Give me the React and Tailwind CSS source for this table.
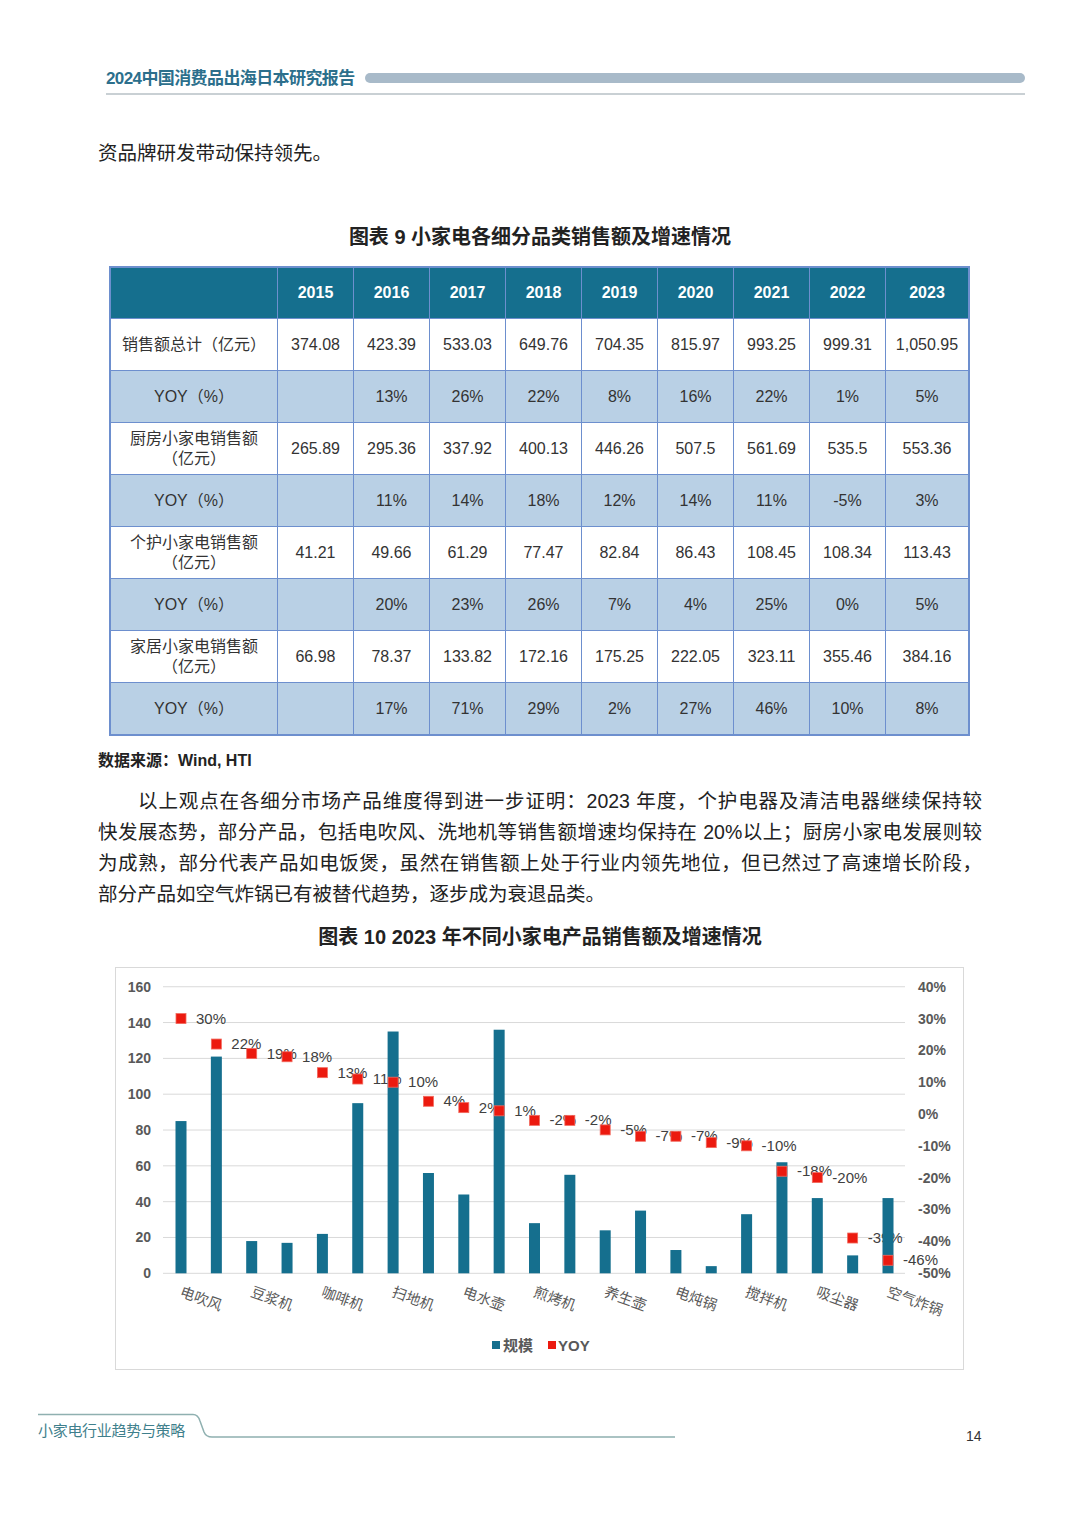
const years = ['2015', '2016', '2017', '2018', '2019', '2020', '2021', '2022', '2023'];

const rows = [
    { label: ['销售额总计（亿元）'], vals: ['374.08', '423.39', '533.03', '649.76', '704.35', '815.97', '993.25', '999.31', '1,050.95'] },
    { label: ['YOY（%）'], yoy: true, vals: ['', '13%', '26%', '22%', '8%', '16%', '22%', '1%', '5%'] },
    { label: ['厨房小家电销售额', '（亿元）'], vals: ['265.89', '295.36', '337.92', '400.13', '446.26', '507.5', '561.69', '535.5', '553.36'] },
    { label: ['YOY（%）'], yoy: true, vals: ['', '11%', '14%', '18%', '12%', '14%', '11%', '-5%', '3%'] },
    { label: ['个护小家电销售额', '（亿元）'], vals: ['41.21', '49.66', '61.29', '77.47', '82.84', '86.43', '108.45', '108.34', '113.43'] },
    { label: ['YOY（%）'], yoy: true, vals: ['', '20%', '23%', '26%', '7%', '4%', '25%', '0%', '5%'] },
    { label: ['家居小家电销售额', '（亿元）'], vals: ['66.98', '78.37', '133.82', '172.16', '175.25', '222.05', '323.11', '355.46', '384.16'] },
    { label: ['YOY（%）'], yoy: true, vals: ['', '17%', '71%', '29%', '2%', '27%', '46%', '10%', '8%'] },
];

const bars = [85, 121, 18, 17, 22, 95, 135, 56, 44, 136, 28, 55, 24, 35, 13, 4, 33, 62, 42, 10, 42];
const yoy = [30, 22, 19, 18, 13, 11, 10, 4, 2, 1, -2, -2, -5, -7, -7, -9, -10, -18, -20, -39, -46];
const cats = ['电吹风', '豆浆机', '咖啡机', '扫地机', '电水壶', '煎烤机', '养生壶', '电炖锅', '搅拌机', '吸尘器', '空气炸锅'];

const font = '"Liberation Sans", "Noto Sans CJK SC", sans-serif';

// page coords -> chart values
const barX = (i) => 181 + i * 35.35;
const leftY = (v) => 1273.3 - v * 1.791;
const rightY = (p) => 1114 - p * 3.18;

const Chart = () => {
    return (
        <svg width="847" height="401" fontFamily={font}>
            <g transform="translate(-116,-968)">
                {[0, 20, 40, 60, 80, 100, 120, 140, 160].map(v => (
                    <g key={v}>
                        <line x1="163" x2="905" y1={leftY(v)} y2={leftY(v)} stroke="#d9d9d9" strokeWidth="1" />
                        <text x="151" y={leftY(v)} dy="5" textAnchor="end" fontSize="14" fontWeight="bold" fill="#595959">{v}</text>
                    </g>
                ))}
                {[40, 30, 20, 10, 0, -10, -20, -30, -40, -50].map(p => (
                    <text key={p} x="918" y={rightY(p)} dy="5" fontSize="14" fontWeight="bold" fill="#595959">{p}%</text>
                ))}
                {yoy.map((p, i) => (
                    <text key={'l' + i} x={barX(i) + 15} y={rightY(p)} dy="5" fontSize="15" fill="#404040">{p}%</text>
                ))}
                {bars.map((v, i) => (
                    <rect key={'b' + i} x={barX(i) - 5.5} y={leftY(v)} width="11" height={1273.3 - leftY(v)} fill="#156f8e" />
                ))}
                {yoy.map((p, i) => (
                    <rect key={'m' + i} x={barX(i) - 5} y={rightY(p) - 5} width="10" height="10" fill="#ec1a0f" stroke="#f26a5e" strokeWidth="0.8" />
                ))}
                {cats.map((c, i) => (
                    <text key={c} transform={`translate(${barX(i * 2) - 2},1296) rotate(20)`} fontSize="14.5" fill="#595959">{c}</text>
                ))}
                <rect x="492" y="1341" width="8" height="8" fill="#156f8e" />
                <text x="503" y="1351" fontSize="15" fontWeight="bold" fill="#595959">规模</text>
                <rect x="548" y="1341" width="8" height="8" fill="#ec1a0f" />
                <text x="558" y="1351" fontSize="15" fontWeight="bold" fill="#595959">YOY</text>
            </g>
        </svg>
    );
};

const App = () => {
    return (
        <div className="w-[1080px] h-[1527px] bg-white text-[#222] pt-[68px]" style={{ fontFamily: font }}>
            {/* header */}
            <div className="ml-[106px] w-[919px]">
                <div className="flex items-center h-[20px] gap-[10px]">
                    <span className="text-[17px] font-bold text-[#2c6f8c] leading-none tracking-[-0.6px]">2024中国消费品出海日本研究报告</span>
                    <div className="flex-1 h-[10px] rounded-full bg-[#a8bac9]"></div>
                </div>
                <div className="mt-[5px] h-[2px] bg-[#c9d0d4]"></div>
            </div>

            <div className="ml-[98px] mt-[43px] text-[19.5px] leading-[31px]">资品牌研发带动保持领先。</div>

            <div className="mt-[53px] text-center text-[20px] leading-[30px] font-bold">图表 9 小家电各细分品类销售额及增速情况</div>

            {/* table */}
            <div className="mt-[14px] ml-[109px] w-[861px] border-2 border-[#6d8fce] bg-[#6d8fce] grid grid-cols-[166px_repeat(8,75px)_1fr] gap-px text-[16px] text-[#333]">
                <div className="h-[50px] bg-[#156f8e]"></div>
                {years.map(y => (
                    <div key={y} className="h-[50px] bg-[#156f8e] flex items-center justify-center text-white font-bold">{y}</div>
                ))}
                {rows.map((r, ri) => (
                    <div key={ri} className="contents">
                        <div className={`h-[51px] flex flex-col items-center justify-center leading-[20px] ${r.yoy ? 'bg-[#b9d0e5]' : 'bg-white'}`}>
                            {r.label.map(l => <span key={l}>{l}</span>)}
                        </div>
                        {r.vals.map((v, vi) => (
                            <div key={vi} className={`h-[51px] flex items-center justify-center ${r.yoy ? 'bg-[#b9d0e5]' : 'bg-white'}`}>{v}</div>
                        ))}
                    </div>
                ))}
            </div>

            <div className="ml-[98px] mt-[13px] text-[16px] leading-[24px] font-bold">数据来源：Wind, HTI</div>

            <div className="ml-[98px] w-[884px] mt-[13px] text-[19.5px] leading-[31px]">
                <div className="pl-[40px] text-justify [text-align-last:justify]">以上观点在各细分市场产品维度得到进一步证明：2023 年度，个护电器及清洁电器继续保持较</div>
                <div className="text-justify [text-align-last:justify]">快发展态势，部分产品，包括电吹风、洗地机等销售额增速均保持在 20%以上；厨房小家电发展则较</div>
                <div className="text-justify [text-align-last:justify]">为成熟，部分代表产品如电饭煲，虽然在销售额上处于行业内领先地位，但已然过了高速增长阶段，</div>
                <div>部分产品如空气炸锅已有被替代趋势，逐步成为衰退品类。</div>
            </div>

            <div className="mt-[12px] text-center text-[20px] leading-[30px] font-bold">图表 10 2023 年不同小家电产品销售额及增速情况</div>

            <div className="mt-[15px] ml-[115px] w-[849px] h-[403px] border border-[#d9d9d9]">
                <Chart />
            </div>

            {/* footer */}
            <div className="mt-[43px] flex items-start">
                <div className="relative ml-[38px] w-[640px] h-[28px]">
                    <svg className="absolute inset-0" width="640" height="28">
                        <path d="M0 1.5 H155 Q160 1.5 162 8 L166 19 Q168 24 174 24 H637" fill="none" stroke="#8fb0b0" strokeWidth="1.5" />
                    </svg>
                    <span className="absolute left-0 top-[8px] text-[15px] leading-[20px] text-[#3f7f8c] tracking-[-0.3px]">小家电行业趋势与策略</span>
                </div>
                <span className="ml-[288px] mt-[14px] text-[14px] leading-[18px] text-[#333]">14</span>
            </div>
        </div>
    );
};

export default App;
